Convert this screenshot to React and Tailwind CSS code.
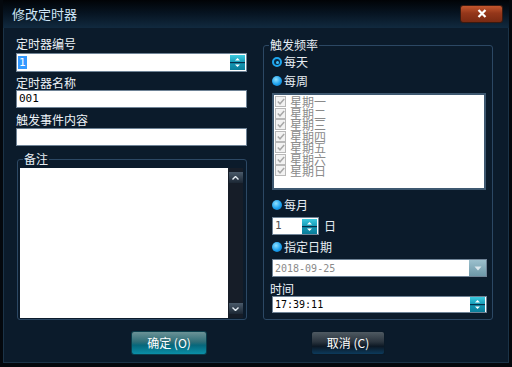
import React from "react";

const cjk = { fontFamily: '"Noto Sans CJK SC", "Noto Sans", sans-serif' };
const mono = { fontFamily: '"DejaVu Sans Mono", "Liberation Mono", monospace' };

const Spin = ({ dim }) => (
  <svg width="15" height="15" viewBox="0 0 15 15" className="shrink-0">
    <defs>
      <linearGradient id={dim ? "sd" : "sb"} x1="0" y1="0" x2="0" y2="1">
        <stop offset="0" stopColor={dim ? "#8fb4c2" : "#3ccbe0"} />
        <stop offset="0.5" stopColor={dim ? "#7aa4b4" : "#1499b6"} />
        <stop offset="1" stopColor={dim ? "#6a95a6" : "#0a7d99"} />
      </linearGradient>
    </defs>
    <rect x="0" y="0" width="15" height="15" fill={`url(#${dim ? "sd" : "sb"})`} />
    {!dim && <rect x="0" y="7" width="15" height="1.2" fill="#06304a" />}
    <path d="M5 5.5 L10 5.5 L7.5 3 Z" fill="#ffffff" />
    <path d="M5 9.5 L10 9.5 L7.5 12 Z" fill="#ffffff" />
  </svg>
);

const Radio = ({ checked, label }) => (
  <div className="flex items-center h-[16px] gap-[2px]">
    {checked ? (
      <span className="w-[10px] h-[10px] rounded-full border-[2px] border-[#1ea6ee] bg-[#0a2a44] flex items-center justify-center">
        <span className="w-[3px] h-[3px] rounded-full bg-[#3cc0ff]" />
      </span>
    ) : (
      <span className="w-[10px] h-[10px] rounded-full bg-[radial-gradient(circle_at_40%_35%,#8fe0ff,#1aa0ee_55%,#0a6bb5)]" />
    )}
    <span className="text-[12px] leading-[14px] text-[#e8eef4]">{label}</span>
  </div>
);

const Group = ({ title, className, children }) => (
  <div className={`relative border border-[#2c4864] rounded-[3px] ${className}`}>
    <span className="absolute left-[5px] top-[-8px] px-[1px] bg-[#0b1b2b] text-[12px] leading-[14px] text-[#e8eef4]">
      {title}
    </span>
    {children}
  </div>
);

const Label = ({ children, className = "" }) => (
  <div className={`text-[12px] leading-[14px] text-[#eef3f8] ${className}`}>{children}</div>
);

const days = ["星期一", "星期二", "星期三", "星期四", "星期五", "星期六", "星期日"];

export default function App() {
  return (
    <div
      style={cjk}
      className="w-[512px] h-[367px] bg-[#0b1b2b] border-l-[3px] border-r-[3px] border-b-[4px] border-[#04080d] flex flex-col shadow-[inset_1px_0_0_#1b3347,inset_-1px_0_0_#1b3347,inset_0_-1px_0_#1b3347]"
    >
      <div className="h-[28px] shrink-0 flex items-center justify-between pl-[9px] pr-[7px] bg-[linear-gradient(#010306,#061320_45%,#112a3f)]">
        <span className="text-[13px] leading-[16px] text-[#cfe6f7]">修改定时器</span>
        <div className="w-[41px] h-[16px] mb-[1px] rounded-[2px] bg-[linear-gradient(#c4572e,#94361a_45%,#7a2a12)] shadow-[0_0_0_1px_#3a1a10] flex items-center justify-center">
          <svg width="10" height="9" viewBox="0 0 10 9">
            <path d="M1.5 1 L8.5 8 M8.5 1 L1.5 8" stroke="#ffffff" strokeWidth="2.2" />
          </svg>
        </div>
      </div>

      <div className="flex pl-[13px]">
        <div className="w-[231px] flex flex-col">
          <Label className="mt-[9px]">定时器编号</Label>
          <div className="mt-[2px] h-[19px] bg-white border border-[#6f8396] flex items-center pl-[1px] pr-[1px]">
            <span style={mono} className="bg-[#3399ff] text-white text-[11px] leading-[13px] px-[1px]">1</span>
            <div className="flex-1" />
            <Spin />
          </div>
          <Label className="mt-[4px]">定时器名称</Label>
          <div className="h-[18px] bg-white border border-[#6f8396] flex items-center pl-[2px]">
            <span style={mono} className="text-[11px] text-black">001</span>
          </div>
          <Label className="mt-[5px]">触发事件内容</Label>
          <div className="mt-[1px] h-[18px] bg-white border border-[#6f8396]" />

          <Group title="备注" className="mt-[13px] ml-[1px] w-[230px] h-[161px]">
            <div className="flex pt-[8px] pl-[2px]">
              <div className="w-[208px] h-[150px] bg-white" />
              <div className="w-[15px] h-[150px] bg-[#161d28] flex flex-col items-center justify-between py-[4px]">
                <div className="w-[14px] h-[11px] bg-[linear-gradient(#4a5a6a,#1c2734)] flex items-center justify-center">
                  <svg width="7" height="4" viewBox="0 0 7 4"><path d="M0.5 3.5 L3.5 0.5 L6.5 3.5" stroke="#e6eef4" strokeWidth="1.4" fill="none" /></svg>
                </div>
                <div className="w-[14px] h-[11px] bg-[linear-gradient(#4a5a6a,#1c2734)] flex items-center justify-center">
                  <svg width="7" height="4" viewBox="0 0 7 4"><path d="M0.5 0.5 L3.5 3.5 L6.5 0.5" stroke="#e6eef4" strokeWidth="1.4" fill="none" /></svg>
                </div>
              </div>
            </div>
          </Group>
        </div>

        <div className="ml-[16px] w-[231px] flex flex-col">
          <Group title="触发频率" className="mt-[17px] w-[230px] h-[275px]">
            <div className="flex flex-col pl-[8px]">
              <div className="mt-[8px]"><Radio checked label="每天" /></div>
              <div className="mt-[3px]"><Radio label="每周" /></div>
              <div className="mt-[4px] w-[214px] h-[97px] bg-white border-2 border-[#3e5870] pt-[1px] pl-[1px]">
                {days.map((d) => (
                  <div key={d} className="h-[11.5px] flex items-center gap-[4px] overflow-visible">
                    <span className="w-[11px] h-[11px] border border-[#b8b8b8] bg-[#f2f2f2] flex items-center justify-center shrink-0">
                      <svg width="8" height="7" viewBox="0 0 8 7"><path d="M0.8 3.5 L3 5.8 L7.2 1" stroke="#a8a8a8" strokeWidth="1.5" fill="none" /></svg>
                    </span>
                    <span className="text-[12px] leading-[11px] text-[#8a8a8a]">{d}</span>
                  </div>
                ))}
              </div>
              <div className="mt-[7px]"><Radio label="每月" /></div>
              <div className="mt-[4px] flex items-center">
                <div className="w-[47px] h-[18px] bg-white border border-[#6f8396] flex items-center justify-between pl-[2px] pr-[1px]">
                  <span style={mono} className="text-[11px] text-[#555]">1</span>
                  <Spin />
                </div>
                <span className="ml-[5px] text-[12px] leading-[14px] text-[#e8eef4]">日</span>
              </div>
              <div className="mt-[4px]"><Radio label="指定日期" /></div>
              <div className="mt-[4px] w-[215px] h-[18px] bg-white border border-[#6f8396] flex items-center justify-between pl-[2px]">
                <span style={mono} className="text-[10px] text-[#8a8a8a]">2018-09-25</span>
                <div className="w-[17px] h-[16px] bg-[linear-gradient(#9cc0cd,#6d98a8)] flex items-center justify-center">
                  <svg width="8" height="5" viewBox="0 0 8 5"><path d="M0.5 0.5 L7.5 0.5 L4 4.5 Z" fill="#dce8ee" /></svg>
                </div>
              </div>
              <Label className="mt-[5px] ml-[-2px]">时间</Label>
              <div className="w-[215px] h-[17px] bg-white border border-[#6f8396] flex items-center justify-between pl-[2px] pr-[1px]">
                <span style={mono} className="text-[10px] text-black">17:39:11</span>
                <Spin />
              </div>
            </div>
          </Group>
        </div>
      </div>

      <div className="flex mt-[12px]">
        <button className="ml-[129px] w-[74px] h-[22px] rounded-[2px] bg-[linear-gradient(#6b9296,#2e6e78_45%,#06677b_60%,#0a8fa8)] shadow-[0_0_0_1px_#0a3c4a] text-[12px] text-white flex items-center justify-center">
          确定 (O)
        </button>
        <button className="ml-[106px] w-[72px] h-[22px] rounded-[2px] bg-[linear-gradient(#4f5a62,#2a343e_45%,#0c1824_65%,#0c3a5c)] shadow-[0_0_0_1px_#0a1a28] text-[12px] text-white flex items-center justify-center">
          取消 (C)
        </button>
      </div>
    </div>
  );
}
